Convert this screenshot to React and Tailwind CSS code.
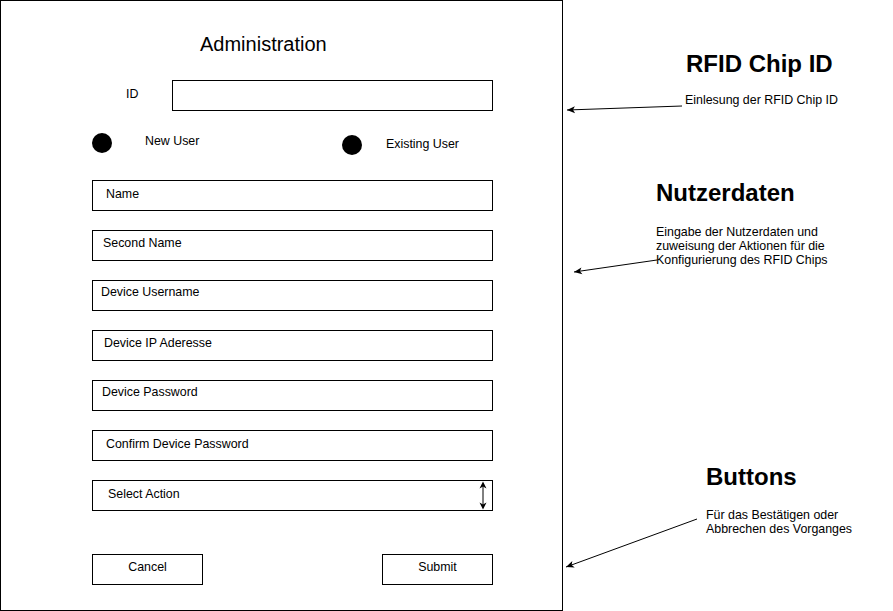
const fields = [
  { label: 'Name', pad: 'pl-[13px] pt-[6px]' },
  { label: 'Second Name', pad: 'pl-[10px] pt-[5px]' },
  { label: 'Device Username', pad: 'pl-[8px] pt-[4px]' },
  { label: 'Device IP Aderesse', pad: 'pl-[11px] pt-[5px]' },
  { label: 'Device Password', pad: 'pl-[9px] pt-[4px]' },
  { label: 'Confirm Device Password', pad: 'pl-[13px] pt-[6px]' },
];

// annotation arrows: [from, tip]
const arrows = [
  [[682, 106], [567, 110]],
  [[657, 260], [574, 272]],
  [[697, 519], [566, 567]],
];

function headPoints([x1, y1], [x2, y2]) {
  const len = Math.hypot(x2 - x1, y2 - y1);
  const dx = (x2 - x1) / len;
  const dy = (y2 - y1) / len;
  const nx = -dy;
  const ny = dx;
  const pts = [
    [x2, y2],
    [x2 - 8 * dx + 3.5 * nx, y2 - 8 * dy + 3.5 * ny],
    [x2 - 6 * dx, y2 - 6 * dy],
    [x2 - 8 * dx - 3.5 * nx, y2 - 8 * dy - 3.5 * ny],
  ];
  return pts.map((p) => p.join(',')).join(' ');
}

function UpDownArrow() {
  return (
    <svg width="12" height="29" viewBox="0 0 12 29" className="mr-[3px] shrink-0">
      <line x1="6" y1="4" x2="6" y2="25" stroke="#000" strokeWidth="1" />
      <polygon points="6,0.5 2.5,7.5 6,5.5 9.5,7.5" fill="#000" />
      <polygon points="6,28.5 2.5,21.5 6,23.5 9.5,21.5" fill="#000" />
    </svg>
  );
}

export default function App() {
  return (
    <div className="relative flex w-[893px] h-[611px] bg-white text-black font-['Liberation_Sans',Arial,sans-serif]">
      {/* form frame */}
      <div className="flex flex-col w-[563px] h-[611px] shrink-0 border border-black">
        <h1 className="mt-[31px] ml-[199px] text-[20px] leading-[24px] font-normal">Administration</h1>

        <div className="flex items-start mt-[24px] pl-[125px]">
          <span className="w-[46px] mt-[7px] text-[12.4px] leading-[14px]">ID</span>
          <div className="w-[321px] h-[31px] border border-black" />
        </div>

        <div className="flex items-start pt-[22px] pl-[91px]">
          <div className="flex items-start w-[250px]">
            <span className="w-[20px] h-[20px] rounded-full bg-black shrink-0" />
            <span className="ml-[33px] mt-[1px] text-[12.4px] leading-[14px]">New User</span>
          </div>
          <div className="flex items-start">
            <span className="w-[20px] h-[20px] mt-[2px] rounded-full bg-black shrink-0" />
            <span className="ml-[24px] mt-[4px] text-[12.4px] leading-[14px]">Existing User</span>
          </div>
        </div>

        <div className="flex flex-col gap-[19px] mt-[25px] ml-[91px]">
          {fields.map((f) => (
            <div key={f.label} className={`w-[401px] h-[31px] border border-black text-[12.4px] leading-[14px] ${f.pad}`}>
              {f.label}
            </div>
          ))}
          <div className="flex items-start w-[401px] h-[31px] border border-black text-[12.4px] leading-[14px]">
            <span className="flex-1 pl-[15px] pt-[6px]">Select Action</span>
            <UpDownArrow />
          </div>
        </div>

        <div className="flex justify-between items-start w-[401px] mt-[43px] ml-[91px]">
          <div className="w-[111px] h-[31px] border border-black pt-[5px] text-[12.4px] leading-[14px] text-center">
            Cancel
          </div>
          <div className="w-[111px] h-[31px] border border-black pt-[5px] text-[12.4px] leading-[14px] text-center">
            Submit
          </div>
        </div>
      </div>

      {/* annotations */}
      <div className="flex flex-col flex-1">
        <h2 className="mt-[50px] ml-[123px] text-[24px] leading-[28px] font-bold">RFID Chip ID</h2>
        <p className="mt-[15px] ml-[122px] text-[12.4px] leading-[14px] whitespace-nowrap">Einlesung der RFID Chip ID</p>

        <h2 className="mt-[72px] ml-[93px] text-[24px] leading-[28px] font-bold">Nutzerdaten</h2>
        <p className="mt-[18px] ml-[93px] text-[12.4px] leading-[14px] whitespace-nowrap">
          Eingabe der Nutzerdaten und
          <br />
          zuweisung der Aktionen für die
          <br />
          Konfigurierung des RFID Chips
        </p>

        <h2 className="mt-[196px] ml-[143px] text-[24px] leading-[28px] font-bold">Buttons</h2>
        <p className="mt-[17px] ml-[143px] text-[12.4px] leading-[14px] whitespace-nowrap">
          Für das Bestätigen oder
          <br />
          Abbrechen des Vorganges
        </p>
      </div>

      <svg className="absolute inset-0 pointer-events-none" width="893" height="611">
        {arrows.map(([from, tip], i) => (
          <g key={i}>
            <line x1={from[0]} y1={from[1]} x2={tip[0]} y2={tip[1]} stroke="#000" strokeWidth="1" />
            <polygon points={headPoints(from, tip)} fill="#000" />
          </g>
        ))}
      </svg>
    </div>
  );
}
